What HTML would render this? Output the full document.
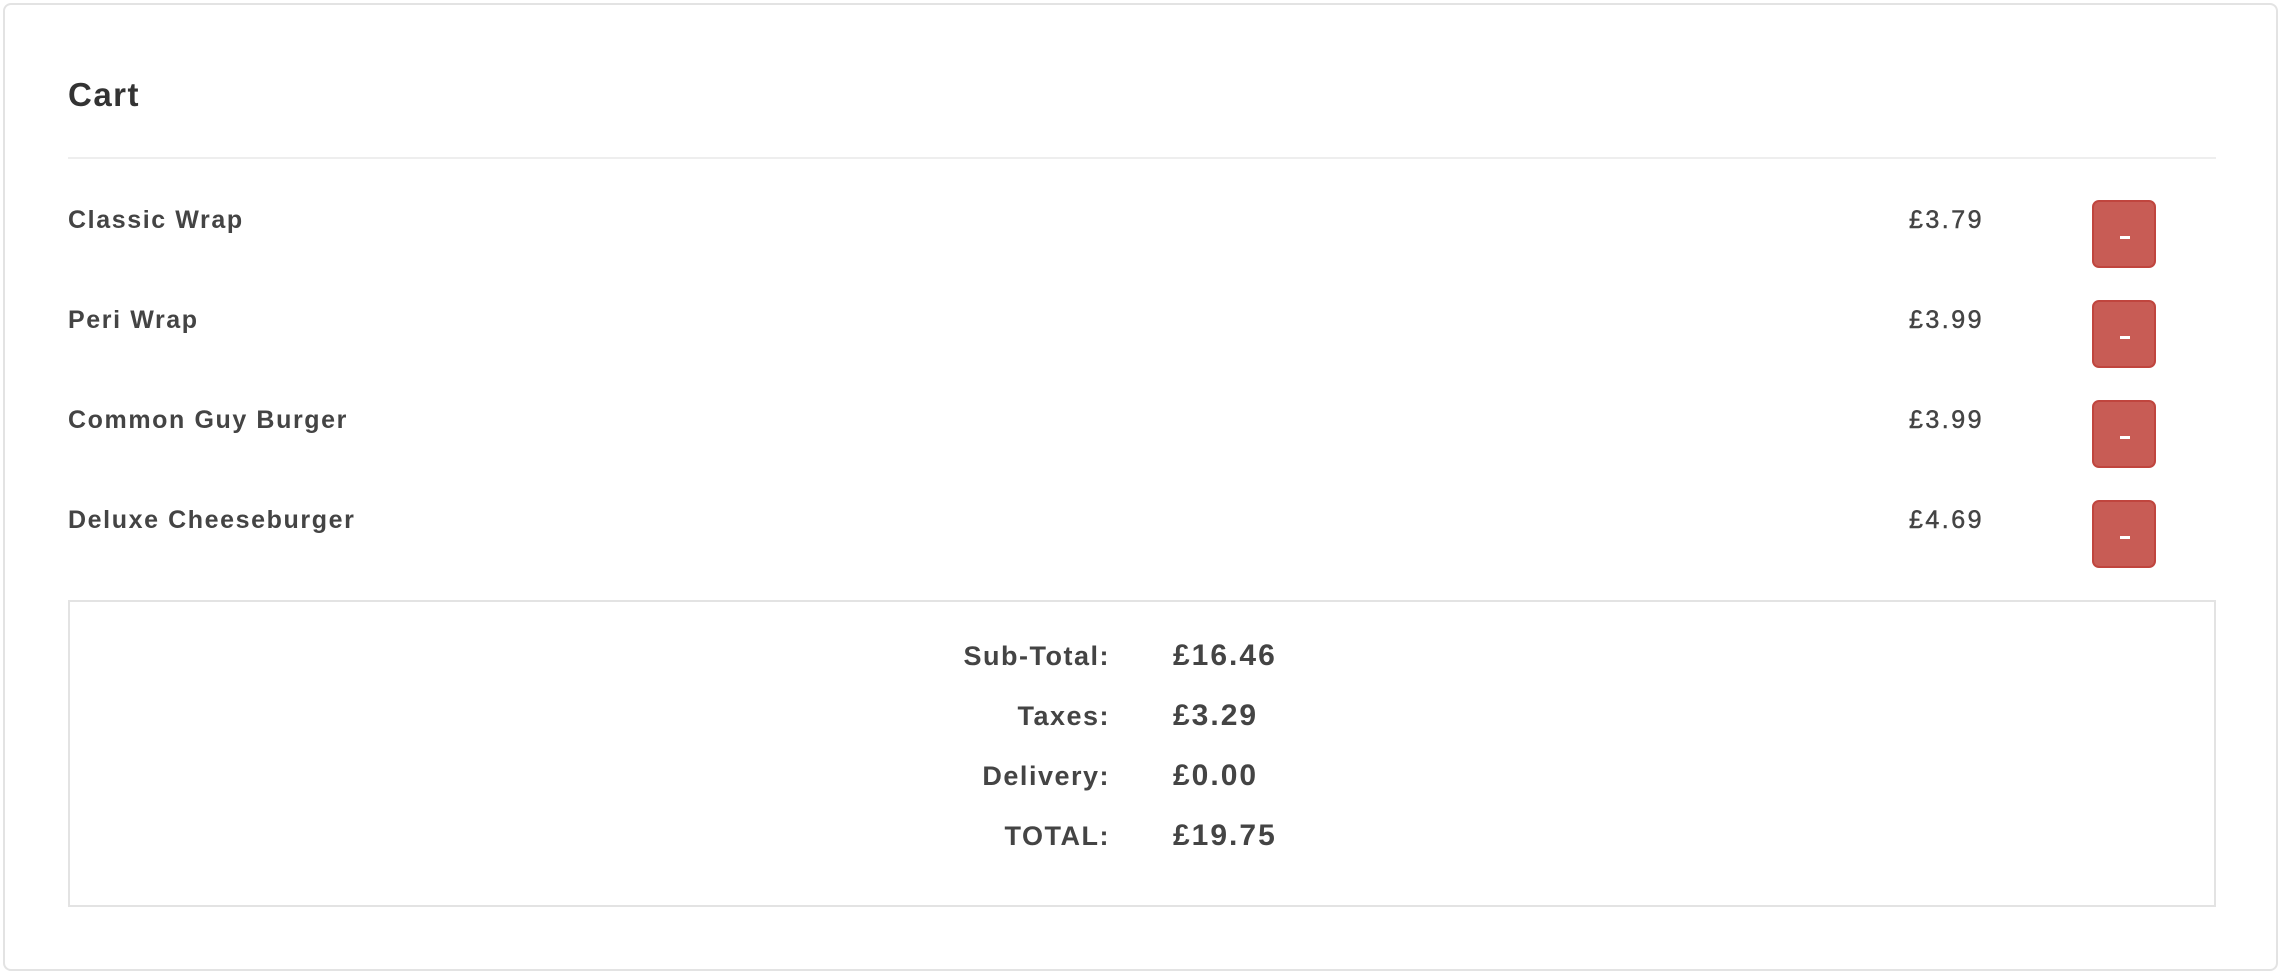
<!DOCTYPE html>
<html><head><style>
body{margin:0;width:2284px;height:976px;background:#fff;font-family:"Liberation Sans",sans-serif;position:relative;overflow:hidden}
.panel{position:absolute;left:3px;top:3px;width:2275px;height:968px;border:2px solid #e3e3e3;border-radius:8px;box-sizing:border-box}
.t{position:absolute;white-space:nowrap;color:#444;font-weight:bold;letter-spacing:1.6px}
.hr{position:absolute;left:68px;top:157px;width:2148px;height:2px;background:#eee}
.btn{position:absolute;left:2092px;width:64px;height:68px;background:#c85c55;border:2px solid #c0453e;border-radius:7px;box-sizing:border-box}
.btn:after{content:"";position:absolute;left:26px;top:34px;width:10px;height:3px;background:#fff}
.box{position:absolute;left:68px;top:600px;width:2148px;height:307px;border:2px solid #e3e3e3;box-sizing:border-box}
.lab{position:absolute;right:1174px;font-size:27px;color:#444;font-weight:bold;line-height:1;letter-spacing:1.5px}
.val{position:absolute;left:1173px;font-size:30px;color:#444;font-weight:bold;line-height:1;letter-spacing:2px}
.p{font-weight:normal;-webkit-text-stroke:0.5px #444;letter-spacing:2.5px}
</style></head><body>
<div class="panel"></div>
<div class="t" style="left:68px;top:76px;font-size:33px;color:#333;font-weight:bold;letter-spacing:1.5px">Cart</div>
<div class="hr"></div>
<div class="t" style="left:68px;top:206px;font-size:25px">Classic Wrap</div>
<div class="t" style="left:68px;top:306px;font-size:25px">Peri Wrap</div>
<div class="t" style="left:68px;top:406px;font-size:25px">Common Guy Burger</div>
<div class="t" style="left:68px;top:506px;font-size:25px">Deluxe Cheeseburger</div>
<div class="t p" style="left:1909px;top:206px;font-size:25px">£3.79</div>
<div class="t p" style="left:1909px;top:306px;font-size:25px">£3.99</div>
<div class="t p" style="left:1909px;top:406px;font-size:25px">£3.99</div>
<div class="t p" style="left:1909px;top:506px;font-size:25px">£4.69</div>
<div class="btn" style="top:200px"></div>
<div class="btn" style="top:300px"></div>
<div class="btn" style="top:400px"></div>
<div class="btn" style="top:500px"></div>
<div class="box"></div>
<div class="lab" style="top:643px">Sub-Total:</div><div class="val" style="top:641px">£16.46</div>
<div class="lab" style="top:703px">Taxes:</div><div class="val" style="top:701px">£3.29</div>
<div class="lab" style="top:763px">Delivery:</div><div class="val" style="top:761px">£0.00</div>
<div class="lab" style="top:823px">TOTAL:</div><div class="val" style="top:821px">£19.75</div>
</body></html>
